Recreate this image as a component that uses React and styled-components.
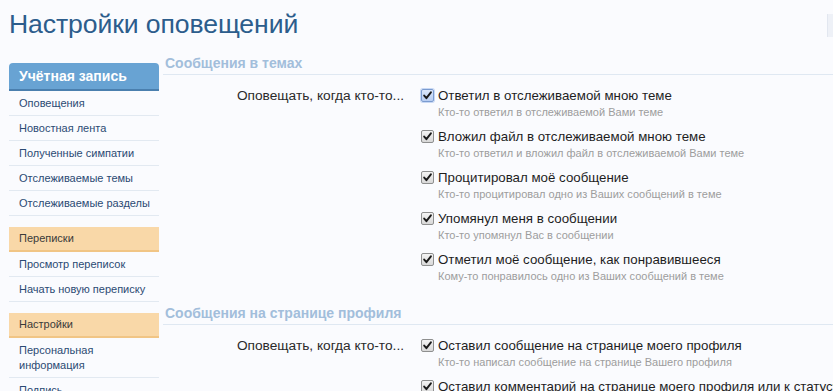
import React from "react";
import styled, { createGlobalStyle } from "styled-components";

const Global = createGlobalStyle`
  html, body { margin: 0; padding: 0; background: #fafbfe; }
  body { font-family: "Liberation Sans", Arial, sans-serif; overflow: hidden; }
`;

const Page = styled.div`
  width: 833px;
  height: 391px;
  overflow: hidden;
  padding-left: 9px;
  box-sizing: border-box;
`;

const TitleRow = styled.div`
  display: flex;
  justify-content: space-between;
  align-items: flex-start;
  height: 50px;
`;

const Title = styled.h1`
  margin: 8px 0 0;
  font-family: "Liberation Sans", Arial, sans-serif;
  font-weight: 400;
  font-size: 26.6px;
  letter-spacing: -0.1px;
  line-height: 32px;
  color: #2c5d8c;
`;

const CornerBox = styled.div`
  width: 5px;
  height: 23px;
  margin-top: 14px;
  background: #eef1f7;
  border-left: 1px solid #e2e7f0;
`;

const Body = styled.div`
  display: grid;
  grid-template-columns: 150px 1fr;
  column-gap: 4px;
`;

const Sidebar = styled.nav`
  display: flex;
  flex-direction: column;
  padding-top: 13px;
`;

const Group = styled.div`
  display: flex;
  flex-direction: column;
  margin-bottom: 11px;
`;

const GroupHead = styled.div`
  font-size: ${(p) => (p.$primary ? "14px" : "11px")};
  font-weight: ${(p) => (p.$primary ? 700 : 400)};
  color: ${(p) => (p.$primary ? "#ffffff" : "#3a3a3a")};
  background: ${(p) => (p.$primary ? "#68a3d3" : "#f9d8a8")};
  border-bottom: 2px solid ${(p) => (p.$primary ? "#4a7fae" : "#f1c585")};
  border-top-left-radius: ${(p) => (p.$primary ? "4px" : "0")};
  border-top-right-radius: ${(p) => (p.$primary ? "4px" : "0")};
  height: ${(p) => (p.$primary ? "26px" : "23px")};
  line-height: ${(p) => (p.$primary ? "26px" : "23px")};
  padding: 0 10px;
`;

const NavItem = styled.a`
  display: block;
  font-size: 11px;
  line-height: 15px;
  color: #2b4a73;
  padding: 5px 4px 4px 10px;
  border-bottom: 1px solid #e2e9f1;
  text-decoration: none;
`;

const Main = styled.main`
  display: flex;
  flex-direction: column;
  min-width: 0;
  padding-top: 2px;
`;

const Section = styled.section`
  display: flex;
  flex-direction: column;
  margin-bottom: 19px;
`;

const SectionHead = styled.h3`
  margin: 0 -20px 0 0;
  padding: 0 2px;
  font-size: 14px;
  font-weight: 700;
  line-height: 22px;
  color: #a2bedb;
  border-bottom: 1px solid #dfe8f2;
`;

const FormRow = styled.div`
  display: grid;
  grid-template-columns: 241px 1fr;
  column-gap: 17px;
  padding-top: 12px;
`;

const RowLabel = styled.div`
  text-align: right;
  font-size: 13.7px;
  line-height: 17px;
  color: #2a2a2a;
`;

const Options = styled.ul`
  list-style: none;
  margin: 0;
  padding: 0;
  display: flex;
  flex-direction: column;
  gap: 9px;
`;

const Option = styled.li`
  display: grid;
  grid-template-columns: 13px 1fr;
  column-gap: 4px;
`;

const Box = styled.span`
  width: 11px;
  height: 11px;
  margin-top: 2px;
  border: 1px solid ${(p) => (p.$focus ? "#7a9bd0" : "#8e8f8f")};
  border-radius: 2px;
  background: ${(p) =>
    p.$focus
      ? "linear-gradient(#dbe7fb, #b8cdf1)"
      : "linear-gradient(#f4f4f4, #d8d8d8)"};
  display: flex;
  align-items: center;
  justify-content: center;
  box-shadow: ${(p) => (p.$focus ? "0 0 0 1px #c8d8f4" : "none")};
`;

const OptText = styled.div`
  display: flex;
  flex-direction: column;
`;

const OptLabel = styled.span`
  font-size: 13.3px;
  line-height: 17px;
  color: #1e1e1e;
  white-space: nowrap;
`;

const Hint = styled.span`
  font-size: 11px;
  line-height: 14px;
  margin-top: 1px;
  color: #9d9d9d;
`;

const Check = () => (
  <svg width="9" height="9" viewBox="0 0 9 9">
    <path d="M1.2 4.6 L3.4 7.2 L7.9 1.3" fill="none" stroke="#1a1a1a" strokeWidth="1.9" strokeLinecap="round" strokeLinejoin="round" />
  </svg>
);

const CheckOption = ({ label, hint, focus }) => (
  <Option>
    <Box $focus={focus}>
      <Check />
    </Box>
    <OptText>
      <OptLabel>{label}</OptLabel>
      {hint && <Hint>{hint}</Hint>}
    </OptText>
  </Option>
);

const nav = [
  {
    head: "Учётная запись",
    primary: true,
    items: ["Оповещения", "Новостная лента", "Полученные симпатии", "Отслеживаемые темы", "Отслеживаемые разделы"],
  },
  { head: "Переписки", items: ["Просмотр переписок", "Начать новую переписку"] },
  { head: "Настройки", items: ["Персональная информация", "Подпись"] },
];

const sections = [
  {
    title: "Сообщения в темах",
    options: [
      ["Ответил в отслеживаемой мною теме", "Кто-то ответил в отслеживаемой Вами теме", true],
      ["Вложил файл в отслеживаемой мною теме", "Кто-то ответил и вложил файл в отслеживаемой Вами теме"],
      ["Процитировал моё сообщение", "Кто-то процитировал одно из Ваших сообщений в теме"],
      ["Упомянул меня в сообщении", "Кто-то упомянул Вас в сообщении"],
      ["Отметил моё сообщение, как понравившееся", "Кому-то понравилось одно из Ваших сообщений в теме"],
    ],
  },
  {
    title: "Сообщения на странице профиля",
    options: [
      ["Оставил сообщение на странице моего профиля", "Кто-то написал сообщение на странице Вашего профиля"],
      ["Оставил комментарий на странице моего профиля или к статусу", "Кто-то оставил комментарий"],
    ],
  },
];

export default function App() {
  return (
    <Page>
      <Global />
      <TitleRow>
        <Title>Настройки оповещений</Title>
        <CornerBox />
      </TitleRow>
      <Body>
        <Sidebar>
          {nav.map((g) => (
            <Group key={g.head}>
              <GroupHead $primary={g.primary}>{g.head}</GroupHead>
              {g.items.map((it) => (
                <NavItem key={it}>{it}</NavItem>
              ))}
            </Group>
          ))}
        </Sidebar>
        <Main>
          {sections.map((s) => (
            <Section key={s.title}>
              <SectionHead>{s.title}</SectionHead>
              <FormRow>
                <RowLabel>Оповещать, когда кто-то...</RowLabel>
                <Options>
                  {s.options.map(([l, h, f]) => (
                    <CheckOption key={l} label={l} hint={h} focus={f} />
                  ))}
                </Options>
              </FormRow>
            </Section>
          ))}
        </Main>
      </Body>
    </Page>
  );
}
